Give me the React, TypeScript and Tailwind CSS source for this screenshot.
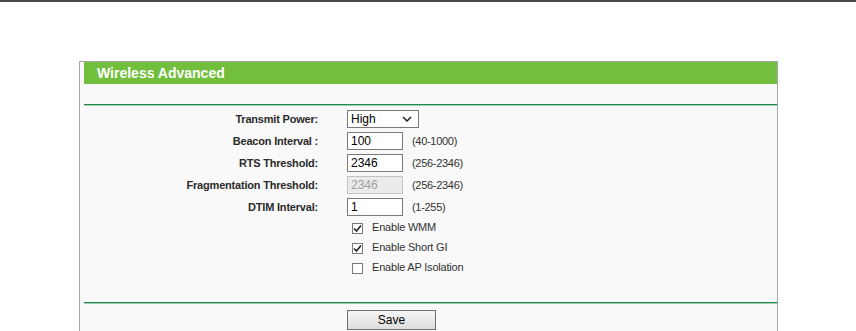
// Router admin page: Wireless Advanced settings panel
const ROWS = [
  { label: 'Beacon Interval :', value: '100', hint: '(40-1000)' },
  { label: 'RTS Threshold:', value: '2346', hint: '(256-2346)' },
  { label: 'Fragmentation Threshold:', value: '2346', hint: '(256-2346)', disabled: true },
  { label: 'DTIM Interval:', value: '1', hint: '(1-255)' },
]

const CHECKS = [
  { label: 'Enable WMM', checked: true },
  { label: 'Enable Short GI', checked: true },
  { label: 'Enable AP Isolation', checked: false },
]

function Label({ children }: { children: string }) {
  return (
    <div className="w-[234px] shrink-0 text-right text-[11px] font-bold tracking-[-0.2px] text-[#2b2b2b]">
      {children}
    </div>
  )
}

function Box({ checked }: { checked: boolean }) {
  return (
    <span className="w-[11px] h-[11px] border border-[#7a7a7a] bg-white flex items-center justify-center">
      {checked && (
        <svg width="9" height="9" viewBox="0 0 9 9" aria-hidden="true">
          <path d="M1 4.5 L3.5 7 L8 1.5" fill="none" stroke="#222" strokeWidth="1.6" />
        </svg>
      )}
    </span>
  )
}

export default function App() {
  return (
    <div className="h-[331px] bg-white font-['Liberation_Sans',Arial,sans-serif] overflow-hidden">
      <div className="h-[2px] bg-[#4a4a4a]" />
      <div className="pt-[59px] pl-[79px]">
        <div className="w-[699px] border border-[#a6a6a6] bg-[#f9f9f9] pl-[4px] pb-[3px]">
          <div className="h-[22px] bg-[#71bf3c] pl-[13px] text-[14px] leading-[22px] font-bold text-white">
            Wireless Advanced
          </div>
          <div className="h-[20px]" />
          <div className="h-[2px] border-t border-[#22884a] bg-[#a3cdb0]" />

          <div className="pt-[2px]">
            <div className="h-[22px] flex items-center">
              <Label>Transmit Power:</Label>
              <div className="ml-[29px] w-[72px] h-[18px] border border-[#7a7a7a] bg-white flex items-center justify-between pl-[3px] pr-[6px]">
                <span className="text-[12px] text-black">High</span>
                <svg width="10" height="6" viewBox="0 0 10 6" aria-hidden="true">
                  <path d="M1 1 L5 5 L9 1" fill="none" stroke="#222" strokeWidth="1.5" />
                </svg>
              </div>
            </div>
            {ROWS.map(r => (
              <div key={r.label} className="h-[22px] flex items-center">
                <Label>{r.label}</Label>
                <div
                  className={`ml-[29px] w-[56px] h-[18px] border flex items-center pl-[3px] text-[12px] ${
                    r.disabled ? 'border-[#c4c4c4] bg-[#ebebeb] text-[#a0a0a0]' : 'border-[#7a7a7a] bg-white text-black'
                  }`}
                >
                  {r.value}
                </div>
                <span className="ml-[9px] text-[11px] tracking-[-0.3px] text-[#333]">{r.hint}</span>
              </div>
            ))}
            {CHECKS.map(c => (
              <div key={c.label} className="h-[20px] flex items-center pl-[268px]">
                <Box checked={c.checked} />
                <span className="ml-[9px] text-[11px] tracking-[-0.2px] text-[#333] -mt-[2px]">{c.label}</span>
              </div>
            ))}
          </div>

          <div className="h-[24px]" />
          <div className="h-[2px] border-t border-[#22884a] bg-[#a3cdb0]" />
          <div className="mt-[3px] pl-[263px]">
            <button
              type="button"
              className="w-[89px] h-[20px] border border-[#707070] bg-gradient-to-b from-[#f6f6f6] to-[#dedede] text-[12px] text-black leading-none"
            >
              Save
            </button>
          </div>
        </div>
      </div>
    </div>
  )
}
